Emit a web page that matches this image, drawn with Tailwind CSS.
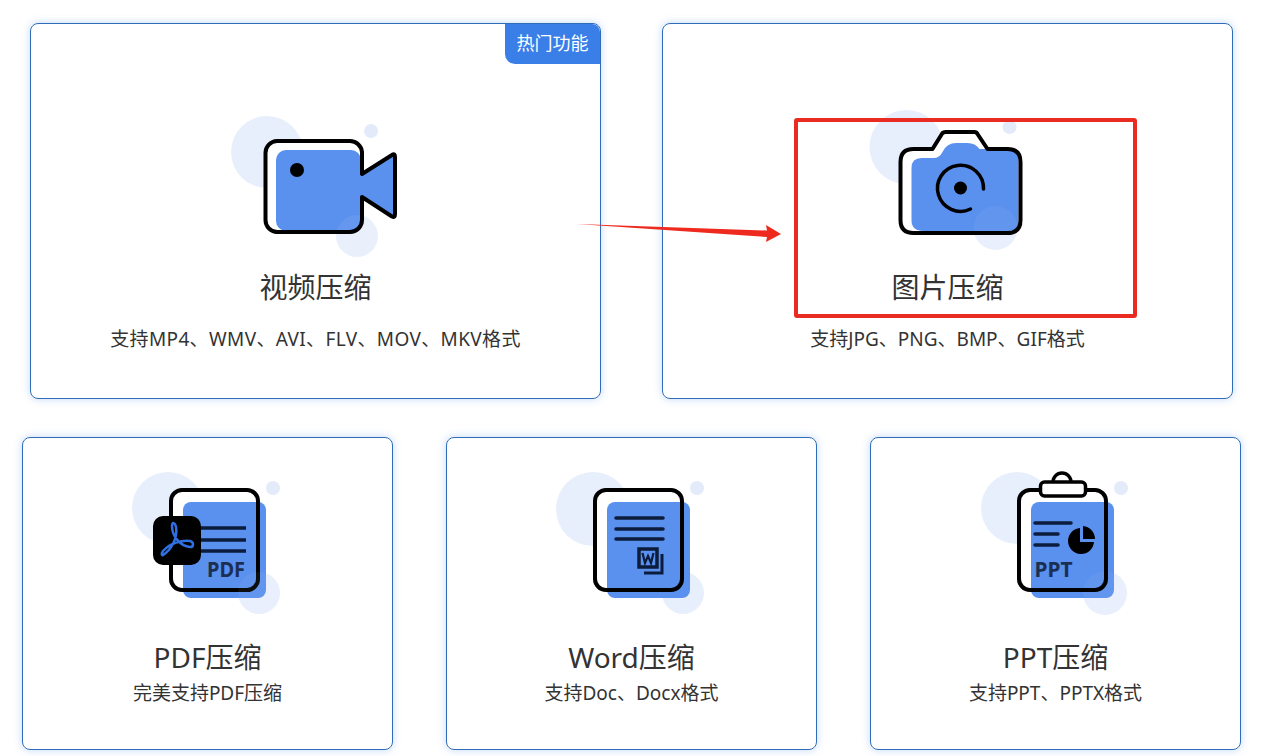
<!DOCTYPE html>
<html lang="zh-CN">
<head>
<meta charset="utf-8">
<script src="https://cdn.jsdelivr.net/npm/@tailwindcss/browser@4"></script>
<title>压缩</title>
</head>
<body class="bg-white">
<div class="relative w-[1261px] h-[756px] overflow-hidden font-['Noto_Sans','Noto_Sans_CJK_SC',sans-serif] text-[#333]">
  <div class="flex gap-[61px] pl-[30px] pt-[23px]">
    <section class="relative w-[571px] h-[376px] rounded-lg border border-[#2f6db8] shadow-[0_0_8px_rgba(60,130,240,0.3)] flex flex-col items-center pt-[76px]">
      <div class="absolute top-0 right-0 w-[95px] h-[40px] bg-[#3a7ee8] text-white text-[18px] leading-[38px] text-center rounded-tr-lg rounded-bl-[10px]">热门功能</div>
      <svg class="block" width="190" height="170" viewBox="221 100 190 170">
        <circle cx="267" cy="152" r="36" fill="#e8effc"/>
        <circle cx="371" cy="131" r="7" fill="#e3eafa"/>
        <circle cx="357" cy="236" r="21" fill="#e8effc"/>
        <rect x="265.500" y="141" width="96" height="91" rx="12" fill="#fff"/>
        <path d="M361 175 L394 154 V217 L361 196 Z" fill="#5a90ee"/>
        <rect x="276" y="150" width="85" height="81" rx="10" fill="#5a90ee"/>
        <circle cx="357" cy="236" r="21" fill="#fff" opacity=".07"/>
        <path d="M362 174 V152 A12 12 0 0 0 350 141 H277 A12 12 0 0 0 265.500 153 V220 A12 12 0 0 0 277 232 H350 A12 12 0 0 0 362 220 V197 L392 216.500 Q395 218 395 214 V157 Q395 153 392 155 Z" fill="none" stroke="#000" stroke-width="4" stroke-linejoin="round"/>
        <circle cx="297" cy="170" r="7" fill="#000"/>
      </svg>
      <h2 class="text-[28px] leading-[36px] mt-[-1px]">视频压缩</h2>
      <p class="text-[19px] leading-[26px] mt-[21px] tracking-[0.37px]">支持MP4、WMV、AVI、FLV、MOV、MKV格式</p>
    </section>
    <section class="w-[571px] h-[376px] rounded-lg border border-[#2f6db8] shadow-[0_0_8px_rgba(60,130,240,0.3)] flex flex-col items-center pt-[76px]">
      <svg class="block" width="190" height="170" viewBox="853.500 100 190 170">
        <circle cx="907" cy="147" r="37" fill="#e8effc"/>
        <circle cx="1010" cy="127" r="7" fill="#e3eafa"/>
        <circle cx="996" cy="228" r="22" fill="#e8effc"/>
        <path d="M901 162 Q901 149 914 149 H934 L944 133 H976 L987 149 H1008 Q1021 149 1021 162 V220 Q1021 233 1008 233 H914 Q901 233 901 220 Z" fill="#fff"/>
        <path d="M912 168 Q912 158 922 158 H934 Q940 158 943 152 Q947 143 957 143 H968 Q976 143 980 149 H1008 Q1019 149 1019 160 V222 Q1019 231 1010 231 H924 Q912 231 912 220 Z" fill="#5a90ee"/>
        <circle cx="996" cy="228" r="22" fill="#fff" opacity=".05"/>
        <path d="M901 162 Q901 149 914 149 H933 L943 133 Q944 132 946 132 H975 Q977 132 978 134 L988 149 H1008 Q1021 149 1021 162 V220 Q1021 233 1008 233 H914 Q901 233 901 220 Z" fill="none" stroke="#000" stroke-width="4" stroke-linejoin="round"/>
        <path d="M984 189 A23 23 0 1 0 971 209" fill="none" stroke="#000" stroke-width="3.500" stroke-linecap="round"/>
        <circle cx="961" cy="188" r="6.500" fill="#000"/>
      </svg>
      <h2 class="text-[28px] leading-[36px] mt-[-1px]">图片压缩</h2>
      <p class="text-[19px] leading-[26px] mt-[21px]">支持JPG、PNG、BMP、GIF格式</p>
    </section>
  </div>
  <div class="flex gap-[53px] pl-[22px] mt-[38px]">
    <section class="w-[371px] h-[313px] rounded-lg border border-[#2f6db8] shadow-[0_0_8px_rgba(60,130,240,0.3)] flex flex-col items-center pt-[27px]">
      <svg class="block" width="165" height="155" viewBox="125 465 165 155">
        <circle cx="168" cy="508" r="36" fill="#e8effc"/>
        <circle cx="273" cy="488" r="7" fill="#e3eafa"/>
        <circle cx="259" cy="593" r="21" fill="#e8effc"/>
        <rect x="171" y="490" width="87" height="100" rx="11" fill="#fff"/>
        <rect x="183" y="502" width="83" height="96" rx="8" fill="#5a90ee"/>
        <rect x="171" y="490" width="87" height="100" rx="11" fill="none" stroke="#000" stroke-width="4"/>
        <path d="M201 528 H246 M201 540 H246 M201 551 H246" stroke="#0b1c3d" stroke-width="3.500"/>
        <rect x="153" y="516" width="48" height="49" rx="10" fill="#000"/>
        <path d="M163 555 C171 550 178 538 176 527 C175 522 172 522 172 526 C172 536 180 546 190 547 C194 547 194 542 190 541 C182 540 170 543 163 551 C161 554 162 556 163 555 Z" fill="none" stroke="#2f6fe0" stroke-width="2.500" stroke-linejoin="round"/>
        <text x="226" y="577" text-anchor="middle" font-family="Noto Sans" font-weight="700" font-size="21" textLength="38" lengthAdjust="spacingAndGlyphs" fill="#1b2f52">PDF</text>
        <circle cx="259" cy="593" r="21" fill="#fff" opacity=".05"/>
      </svg>
      <h2 class="text-[28px] leading-[36px] mt-[19px]">PDF压缩</h2>
      <p class="text-[19px] leading-[26px] mt-[5px]">完美支持PDF压缩</p>
    </section>
    <section class="w-[371px] h-[313px] rounded-lg border border-[#2f6db8] shadow-[0_0_8px_rgba(60,130,240,0.3)] flex flex-col items-center pt-[27px]">
      <svg class="block" width="165" height="155" viewBox="549 465 165 155">
        <circle cx="593" cy="509" r="37" fill="#e8effc"/>
        <circle cx="697" cy="488" r="7" fill="#e3eafa"/>
        <circle cx="683" cy="593" r="21" fill="#e8effc"/>
        <rect x="595" y="490" width="87" height="100" rx="11" fill="#fff"/>
        <rect x="607" y="502" width="83" height="96" rx="8" fill="#5a90ee"/>
        <rect x="595" y="490" width="87" height="100" rx="11" fill="none" stroke="#000" stroke-width="4"/>
        <path d="M616 518 H663 M616 529 H663 M616 539 H663" stroke="#0b1c3d" stroke-width="3.500" stroke-linecap="round"/>
        <rect x="639" y="549" width="18" height="18" fill="none" stroke="#0b1c3d" stroke-width="3.500"/>
        <path d="M642.500 553 L645 563 L648 556 L651 563 L653.500 553" fill="none" stroke="#0b1c3d" stroke-width="2.200"/>
        <path d="M662 554 V573 H644" fill="none" stroke="#0b1c3d" stroke-width="3"/>
      </svg>
      <h2 class="text-[28px] leading-[36px] mt-[19px]">Word压缩</h2>
      <p class="text-[19px] leading-[26px] mt-[5px]">支持Doc、Docx格式</p>
    </section>
    <section class="w-[371px] h-[313px] rounded-lg border border-[#2f6db8] shadow-[0_0_8px_rgba(60,130,240,0.3)] flex flex-col items-center pt-[27px]">
      <svg class="block" width="165" height="155" viewBox="973 465 165 155">
        <circle cx="1017" cy="508" r="36" fill="#e8effc"/>
        <circle cx="1121" cy="488" r="7" fill="#e3eafa"/>
        <circle cx="1105" cy="593" r="22" fill="#e8effc"/>
        <rect x="1019" y="490" width="87" height="100" rx="11" fill="#fff"/>
        <rect x="1031" y="502" width="83" height="96" rx="8" fill="#5a90ee"/>
        <circle cx="1105" cy="593" r="22" fill="#fff" opacity=".05"/>
        <rect x="1019" y="490" width="87" height="100" rx="11" fill="none" stroke="#000" stroke-width="4"/>
        <path d="M1053 482 A9 9 0 0 1 1071 482" fill="#fff" stroke="#000" stroke-width="3.500"/>
        <rect x="1040.500" y="482" width="45" height="14" rx="4" fill="#fff" stroke="#000" stroke-width="3.500"/>
        <path d="M1035 523 H1071 M1035 534 H1058 M1035 545 H1058" stroke="#0b1c3d" stroke-width="3.500" stroke-linecap="round"/>
        <path d="M1080 528 A13 13 0 1 0 1094 542 H1080 Z" fill="#000"/>
        <path d="M1083 526 A13 13 0 0 1 1095 539 H1083 Z" fill="#000"/>
        <text x="1053.500" y="577" text-anchor="middle" font-family="Noto Sans" font-weight="700" font-size="21" textLength="38" lengthAdjust="spacingAndGlyphs" fill="#1b2f52">PPT</text>
      </svg>
      <h2 class="text-[28px] leading-[36px] mt-[19px]">PPT压缩</h2>
      <p class="text-[19px] leading-[26px] mt-[5px]">支持PPT、PPTX格式</p>
    </section>
  </div>
  <div class="absolute left-[794px] top-[118px] w-[343px] h-[200px] border-4 border-[#e92b22] rounded-[3px]"></div>
  <svg class="absolute left-0 top-0 pointer-events-none" width="1261" height="756" viewBox="0 0 1261 756">
    <path d="M577 224 L767 230.500 L766 225 L781 234 L766 242 L767 237 Z" fill="#ee2a1e"/>
  </svg>
</div>
</body>
</html>
